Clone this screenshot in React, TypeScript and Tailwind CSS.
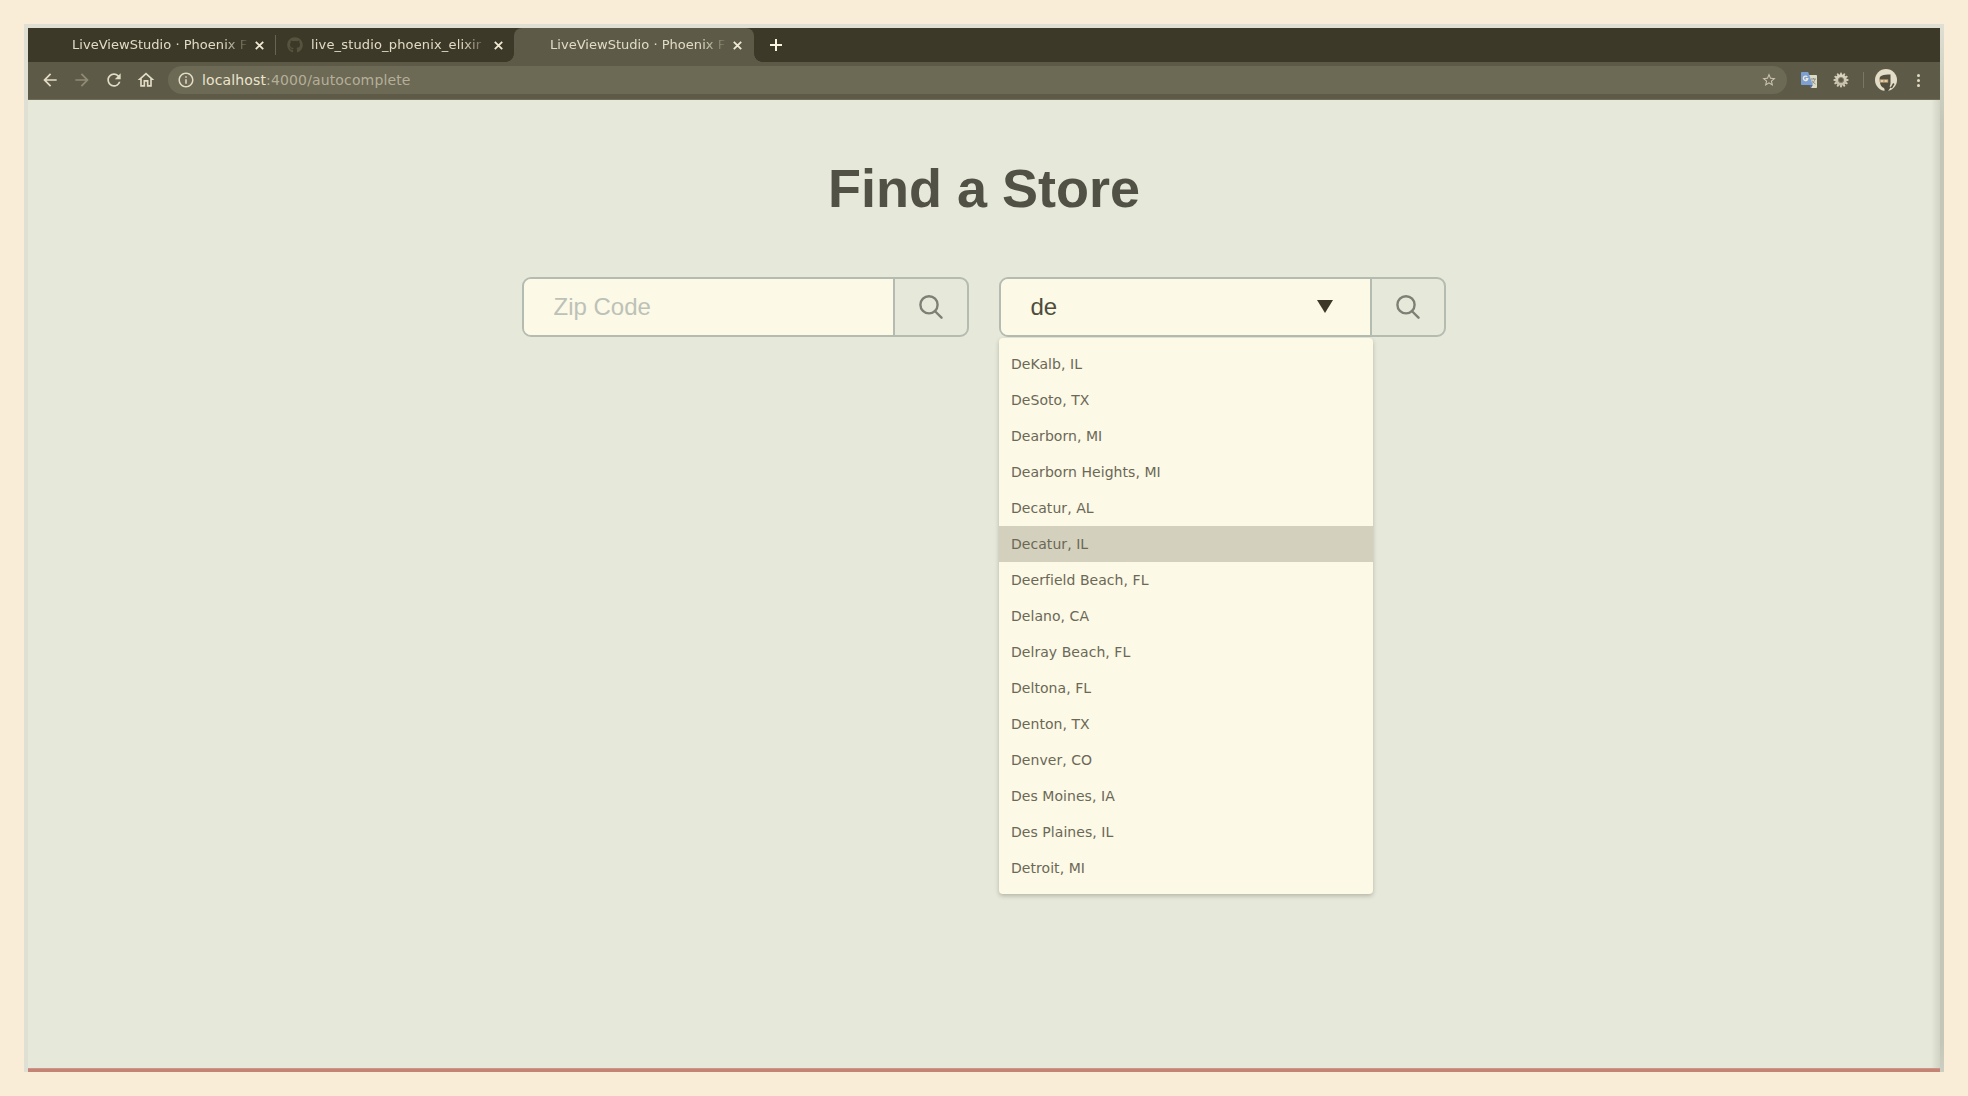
import React from "react";
import { FaGithub } from "react-icons/fa";
import { MdArrowBack, MdArrowForward, MdRefresh, MdStarBorder, MdOutlineInfo, MdOutlineHome } from "react-icons/md";

const cities = [
  "DeKalb, IL",
  "DeSoto, TX",
  "Dearborn, MI",
  "Dearborn Heights, MI",
  "Decatur, AL",
  "Decatur, IL",
  "Deerfield Beach, FL",
  "Delano, CA",
  "Delray Beach, FL",
  "Deltona, FL",
  "Denton, TX",
  "Denver, CO",
  "Des Moines, IA",
  "Des Plaines, IL",
  "Detroit, MI",
];

function CloseIcon() {
  return (
    <svg className="size-[9px] shrink-0" viewBox="0 0 9 9" fill="none" stroke="#efe9d3" strokeWidth="1.8">
      <path d="M0.8 0.8 8.2 8.2M8.2 0.8 0.8 8.2" />
    </svg>
  );
}

function TabTitle({ children, className }: { children: string; className: string }) {
  return (
    <span
      className={`whitespace-nowrap text-[13px] leading-[18px] text-[#e1dbc5] [mask-image:linear-gradient(to_right,black_calc(100%-26px),transparent)] ${className}`}
    >
      {children}
    </span>
  );
}

function TabCurve({ className }: { className: string }) {
  return <span className={`absolute bottom-0 size-2 ${className}`} />;
}

function TabBar() {
  return (
    <div className="flex h-[34px] items-center bg-[#3d3928]">
      <div className="flex w-[248px] items-center pl-11">
        <TabTitle className="w-[178px] tracking-[0.03px]">LiveViewStudio · Phoenix F</TabTitle>
        <span className="ml-[5px] flex"><CloseIcon /></span>
      </div>
      <div className="-ml-px h-5 w-px bg-[#69634f]" />
      <div className="flex w-[239px] items-center pl-[11px]">
        <FaGithub className="size-4 shrink-0 text-[#56543f]" />
        <TabTitle className="ml-[8px] w-[178px] tracking-[0.16px]">live_studio_phoenix_elixir</TabTitle>
        <span className="ml-[5px] flex"><CloseIcon /></span>
      </div>
      <div className="relative -ml-px flex h-[34px] w-[240px] items-center rounded-t-lg bg-[#5d5b47] pl-9">
        <TabCurve className="-left-2 bg-[radial-gradient(circle_at_0_0,transparent_7.5px,#5d5b47_8px)]" />
        <TabTitle className="w-[178px] tracking-[0.03px]">LiveViewStudio · Phoenix F</TabTitle>
        <span className="ml-[5px] flex"><CloseIcon /></span>
        <TabCurve className="-right-2 bg-[radial-gradient(circle_at_100%_0,transparent_7.5px,#5d5b47_8px)]" />
      </div>
      <svg className="ml-4 size-3" viewBox="0 0 12 12" stroke="#fbf5df" strokeWidth="2">
        <path d="M6 0v12M0 6h12" />
      </svg>
    </div>
  );
}

function TranslateIcon() {
  return (
    <svg className="size-4" viewBox="0 0 16 16">
      <path d="M7 3h8.2a.8.8 0 0 1 .8.8v11.4a.8.8 0 0 1-.8.8H10Z" fill="#ddd9c5" />
      <path d="M10 7h5M12.5 6v1M14 7c-.5 2.300-2 4-3.500 5M11 8.500c.8 1.600 2 2.700 3.500 3.500" fill="none" stroke="#7f8a87" strokeWidth=".9" />
      <path d="M8.500 13h3.300L10 16Z" fill="#5665a8" />
      <path d="M.8 0h6.400l4.600 13H.8a.8.8 0 0 1-.8-.8V.8A.8.800 0 0 1 .8 0Z" fill="#7c9fd4" />
      <path d="M6.300 4.900a2.200 2.200 0 1 0 .5 1.800H4.700" fill="none" stroke="#eee9da" strokeWidth="1.400" />
    </svg>
  );
}

function GearIcon() {
  return (
    <svg className="size-4" viewBox="-8 -8 16 16">
      <defs>
        <linearGradient id="gear" x1="0" y1="-8" x2="0" y2="8" gradientUnits="userSpaceOnUse">
          <stop offset="0" stopColor="#e3ddc8" />
          <stop offset="1" stopColor="#b9b4a0" />
        </linearGradient>
      </defs>
      {Array.from({ length: 12 }, (_, i) => (
        <path key={i} d="M0-6.600v1.800" stroke="#d0cab5" strokeWidth="2" strokeLinecap="round" transform={`rotate(${i * 30})`} />
      ))}
      <circle r="4.200" fill="none" stroke="url(#gear)" strokeWidth="3.200" />
      <circle r="2.600" fill="#5d5b47" stroke="#8c8672" strokeWidth=".8" />
    </svg>
  );
}

function Avatar() {
  return (
    <svg className="size-[22px]" viewBox="0 0 22 22">
      <circle cx="11" cy="11" r="11" fill="#e3dcc7" />
      <path d="M4.600 9.500C4.600 6.600 8 5.400 15.500 5.400V14c0 1.500-.4 2.600-1 3.600l1.500.4-3 4H9.500C10 20 9 19 7.500 18.300 5.500 17 4.600 14 4.600 9.500Z" fill="#514e3e" />
      <path d="M5 10.400h8.200v3.200H5Z" fill="#c9a87c" />
      <path d="M6 12h2M9.800 12h2" stroke="#fff2d5" strokeWidth="1.100" />
      <path d="m16.300 18.800 2.500-4.300" stroke="#514e3e" strokeWidth="1.600" />
    </svg>
  );
}

function Toolbar() {
  return (
    <div className="flex h-[38px] items-center border-b border-[#6f6c58] bg-[#5d5b47] pb-px pl-3 text-[#e3dcc5]">
      <MdArrowBack className="size-5" />
      <MdArrowForward className="ml-3 size-5 text-[#918b75]" />
      <MdRefresh className="ml-3 size-5" />
      <MdOutlineHome className="ml-3 size-5" />
      <div className="ml-[12px] flex h-7 w-[1619px] items-center rounded-full bg-[#6c6955] pr-2.5 pl-[9px]">
        <MdOutlineInfo className="size-[18px]" />
        <span className="ml-[7px] text-sm leading-5 tracking-[0.14px] text-[#b5af9a]">
          <span className="text-[#ebe5ce]">localhost</span>:4000/autocomplete
        </span>
        <MdStarBorder className="ml-auto size-4 text-[#cac4ae]" />
      </div>
      <span className="ml-[14px]"><TranslateIcon /></span>
      <span className="ml-4"><GearIcon /></span>
      <span className="ml-[14px] h-4 w-px bg-[#7c7763]" />
      <span className="ml-[11px]"><Avatar /></span>
      <svg className="ml-5 h-[13px] w-[3px]" viewBox="0 0 3 13" fill="#e3dcc5">
        <circle cx="1.500" cy="1.500" r="1.500" />
        <circle cx="1.500" cy="6.500" r="1.500" />
        <circle cx="1.500" cy="11.500" r="1.500" />
      </svg>
    </div>
  );
}

function SearchButton() {
  return (
    <button aria-label="Search" className="flex flex-1 items-center justify-center border-l-2 border-[#b4bbb1]">
      <svg className="size-6" viewBox="0 0 24 24" fill="none" stroke="#7f8075" strokeWidth="2.400" strokeLinecap="round">
        <circle cx="10" cy="9.800" r="8.600" />
        <path d="m16.300 16.500 6.200 6.200" />
      </svg>
    </button>
  );
}

export default function App() {
  return (
    <div className="h-[1096px] w-[1968px] bg-[#faedd8] p-6 font-['DejaVu_Sans',sans-serif]">
      <div className="flex h-[1048px] w-[1920px] bg-[#dfe0d3]">
        <div className="flex w-[1916px] flex-col pt-1 pl-1">
          <TabBar />
          <Toolbar />
          <main className="flex flex-1 flex-col items-center bg-[linear-gradient(to_right,#e6e8da_calc(100%-9px),#d1d3c5)]">
            <h1 className="mt-[54px] font-['Liberation_Sans',sans-serif] text-[54px] leading-[68px] font-bold text-[#525145]">
              Find a Store
            </h1>
            <div className="mt-[55px] flex gap-[30px]">
              <form className="flex h-[60px] w-[447px] overflow-hidden rounded-[9px] border-2 border-[#b4bbb1]">
                <div className="flex w-[369px] items-center bg-[#fcf9e6] pl-[29.5px] font-['Liberation_Sans',sans-serif] text-2xl text-[#bcc2b8]">
                  Zip Code
                </div>
                <SearchButton />
              </form>
              <div className="relative">
                <form className="flex h-[60px] w-[447px] overflow-hidden rounded-[9px] border-2 border-[#b4bbb1]">
                  <div className="flex w-[369px] items-center justify-between bg-[#fcf9e6] pr-[37.5px] pl-[29.5px] font-['Liberation_Sans',sans-serif] text-2xl text-[#4e4c3b]">
                    de
                    <svg className="-mt-px h-[13px] w-4" viewBox="0 0 16 13" fill="#3d3827">
                      <path d="M0 0h16L8 13Z" />
                    </svg>
                  </div>
                  <SearchButton />
                </form>
                <ul className="absolute top-[61px] left-0 w-[374px] rounded bg-[#fcf9e6] py-2 text-sm tracking-[0.05px] text-[#6b6856] shadow-[0_2px_4px_rgba(61,56,39,0.28)]">
                  {cities.map((city) => (
                    <li
                      key={city}
                      className={`flex h-9 items-center px-3 ${city === "Decatur, IL" ? "bg-[#d3d0bd]" : ""}`}
                    >
                      {city}
                    </li>
                  ))}
                </ul>
              </div>
            </div>
          </main>
          <div className="h-1 border-t border-[#cc9585] bg-[#c38475]" />
        </div>
        <div className="w-1 bg-[linear-gradient(to_bottom,#dfe0d3,#c4c6b7_100px,#c4c6b7_calc(100%-30px),#cdd0c0)]" />
      </div>
    </div>
  );
}
